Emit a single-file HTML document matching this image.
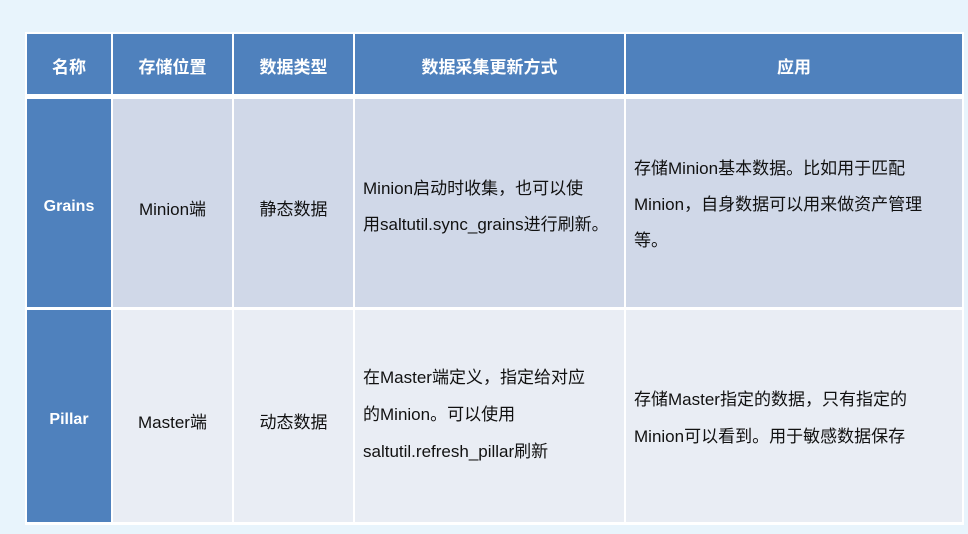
<!DOCTYPE html>
<html><head><meta charset="utf-8"><style>
body{margin:0;width:968px;height:534px;background:#e8f4fc;position:relative;overflow:hidden;font-family:"Liberation Sans","Noto Sans CJK SC",sans-serif;}
.c{position:absolute;display:flex;align-items:center;box-sizing:border-box;font-size:17px;color:#111;}
.h{background:#4f81bd;color:#fff;font-weight:bold;justify-content:center;font-size:17px;padding-top:3px;}
.r1{background:#d0d8e8;}
.r2{background:#e9edf4;}
.ctr{justify-content:center;}
.l{padding-left:8px;line-height:36px;white-space:nowrap;}
.n{background:#4f81bd;color:#fff;font-weight:bold;justify-content:center;font-size:16px;}
#t{position:absolute;left:25px;top:32px;width:939px;height:493px;background:#fff;}
</style></head><body>
<div id="t"></div>
<div class="c h" style="left:27px;top:34px;width:84px;height:60px">名称</div>
<div class="c h" style="left:113px;top:34px;width:119px;height:60px">存储位置</div>
<div class="c h" style="left:234px;top:34px;width:119px;height:60px">数据类型</div>
<div class="c h" style="left:355px;top:34px;width:269px;height:60px">数据采集更新方式</div>
<div class="c h" style="left:626px;top:34px;width:336px;height:60px">应用</div>

<div class="c n" style="left:27px;top:99px;width:84px;height:208px;padding-top:8px">Grains</div>
<div class="c r1 ctr" style="left:113px;top:99px;width:119px;height:208px;padding-top:8px">Minion端</div>
<div class="c r1 ctr" style="left:234px;top:99px;width:119px;height:208px;padding-top:8px">静态数据</div>
<div class="c r1 l" style="left:355px;top:99px;width:269px;height:208px;padding-top:8px">Minion启动时收集，也可以使<br>用saltutil.sync_grains进行刷新。</div>
<div class="c r1 l" style="left:626px;top:99px;width:336px;height:208px;padding-top:4px">存储Minion基本数据。比如用于匹配<br>Minion，自身数据可以用来做资产管理<br>等。</div>

<div class="c n" style="left:27px;top:310px;width:84px;height:212px;padding-top:8px">Pillar</div>
<div class="c r2 ctr" style="left:113px;top:310px;width:119px;height:212px;padding-top:8px">Master端</div>
<div class="c r2 ctr" style="left:234px;top:310px;width:119px;height:212px;padding-top:8px">动态数据</div>
<div class="c r2 l" style="left:355px;top:310px;width:269px;height:212px;line-height:37px;padding-bottom:4px">在Master端定义，指定给对应<br>的Minion。可以使用<br>saltutil.refresh_pillar刷新</div>
<div class="c r2 l" style="left:626px;top:310px;width:336px;height:212px;line-height:37px;padding-top:4px">存储Master指定的数据，只有指定的<br>Minion可以看到。用于敏感数据保存</div>
</body></html>
